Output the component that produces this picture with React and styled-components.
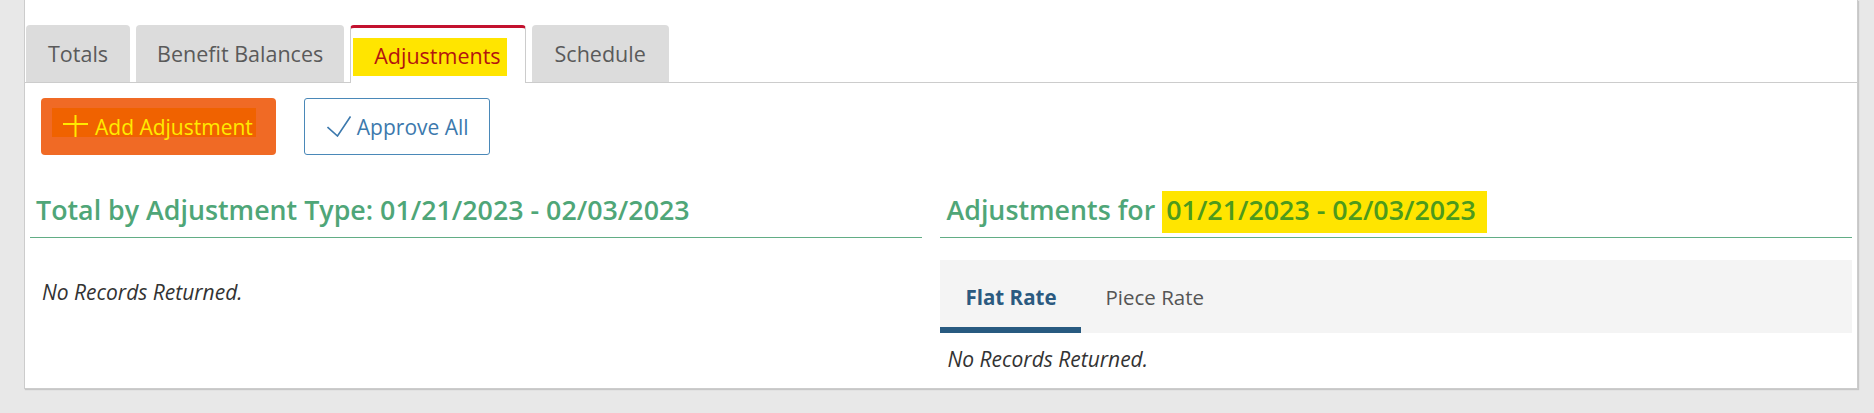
import React from "react";
import styled, { createGlobalStyle } from "styled-components";

const Global = createGlobalStyle`
  html, body { margin: 0; padding: 0; background: #e8e8e8; }
  body { font-family: "Open Sans", "Noto Sans", sans-serif; }
  * { box-sizing: border-box; }
`;

const Page = styled.div`
  width: 1874px;
  height: 413px;
  padding: 0 16px 0 24px;
  background: #e8e8e8;
`;

const Card = styled.div`
  height: 389px;
  background: #fff;
  border: 1px solid #cccccc;
  border-top: none;
  box-shadow: 1px 1px 1px rgba(0, 0, 0, 0.14);
  padding-top: 25px;
`;

const TabList = styled.div`
  display: flex;
  align-items: flex-end;
  gap: 6px;
  height: 58px;
  padding-left: 1px;
  border-bottom: 1px solid #cccccc;
`;

const Tab = styled.div`
  display: flex;
  align-items: center;
  height: ${(p) => (p.$active ? "58px" : "57px")};
  margin-bottom: ${(p) => (p.$active ? "-1px" : "0")};
  padding: ${(p) => (p.$active ? "0 18px 0 2px" : `0 ${p.$pad || 23}px`)};
  background: ${(p) => (p.$active ? "#ffffff" : "#dcdcdc")};
  border: ${(p) => (p.$active ? "1px solid #cccccc" : "none")};
  border-top: ${(p) => (p.$active ? "3px solid #c3122f" : "none")};
  border-bottom: none;
  border-radius: 4px 4px 0 0;
  font-size: 21.5px;
  color: #5a5a5a;
  white-space: nowrap;
`;

const TabMarker = styled.span`
  display: block;
  margin-top: 3px;
  padding: 3px 6px 6px 21px;
  background: #ffe500;
  color: #b3140f;
`;

const Toolbar = styled.div`
  display: flex;
  gap: 28px;
  padding: 15px 16px 0;
`;

const AddButton = styled.button`
  display: inline-flex;
  align-items: center;
  height: 57px;
  padding: 0 20px 0 11px;
  border: none;
  border-radius: 4px;
  background: #f06a25;
  font-family: inherit;
  font-size: 21px;
  color: #ffffff;
`;

const ButtonMarker = styled.span`
  display: inline-flex;
  align-items: flex-end;
  gap: 7px;
  height: 29px;
  margin-bottom: 8px;
  padding: 0 3px 0 11px;
  background: #f06200;
  color: #ffea00;
  line-height: 20px;
`;

const ApproveButton = styled.button`
  display: inline-flex;
  align-items: center;
  gap: 6px;
  height: 57px;
  padding: 0 20px 0 22px;
  border: 1px solid #4a88b8;
  border-radius: 3px;
  background: #ffffff;
  font-family: inherit;
  font-size: 21px;
  color: #3c79ad;
`;

const Columns = styled.div`
  display: grid;
  grid-template-columns: 892fr 911fr;
  column-gap: 18px;
  margin-top: 37px;
  padding: 0 5px;
`;

const Column = styled.section`
  min-width: 0;
`;

const Heading = styled.h2`
  margin: 0;
  padding: 0 6px 10px;
  border-bottom: 1px solid #62ad85;
  font-size: 26.8px;
  font-weight: 600;
  line-height: 35px;
  color: #4fa678;
  white-space: nowrap;
`;

const DateMarker = styled.span`
  padding: 0 11px 5px 4px;
  background: #ffe500;
  color: #4d9a1c;
`;

const Empty = styled.p`
  margin: ${(p) => p.$top}px 0 0;
  padding-left: ${(p) => p.$indent}px;
  font-size: 21px;
  font-style: italic;
  color: #333333;
`;

const SubTabBar = styled.div`
  display: flex;
  height: 73px;
  margin-top: 22px;
  background: #f4f4f4;
`;

const SubTab = styled.div`
  display: flex;
  align-items: center;
  padding: 0 24px 0 25px;
  font-size: 20.5px;
  font-weight: ${(p) => (p.$active ? 700 : 400)};
  color: ${(p) => (p.$active ? "#2b5a80" : "#555555")};
  box-shadow: ${(p) => (p.$active ? "inset 0 -6px 0 #285a80" : "none")};
`;

const PlusIcon = () => (
  <svg width="25" height="22" viewBox="0 0 25 22" fill="none" stroke="currentColor" strokeWidth="2">
    <path d="M12.5 0V22M0 9H25" />
  </svg>
);

const CheckIcon = () => (
  <svg width="24" height="21" viewBox="0 0 24 21" fill="none" stroke="currentColor" strokeWidth="1.6" strokeLinejoin="miter">
    <path d="M0.5 11L10.5 20L23.5 0.5" />
  </svg>
);

export default function App() {
  return (
    <>
      <Global />
      <Page>
        <Card>
          <TabList>
            <Tab $pad={22}>Totals</Tab>
            <Tab $pad={21}>Benefit Balances</Tab>
            <Tab $active>
              <TabMarker>Adjustments</TabMarker>
            </Tab>
            <Tab>Schedule</Tab>
          </TabList>
          <Toolbar>
            <AddButton type="button">
              <ButtonMarker>
                <PlusIcon />
                Add Adjustment
              </ButtonMarker>
            </AddButton>
            <ApproveButton type="button">
              <CheckIcon />
              Approve All
            </ApproveButton>
          </Toolbar>
          <Columns>
            <Column>
              <Heading>Total by Adjustment Type: 01/21/2023 - 02/03/2023</Heading>
              <Empty $top={40} $indent={12}>No Records Returned.</Empty>
            </Column>
            <Column>
              <Heading>
                Adjustments for <DateMarker>01/21/2023 - 02/03/2023</DateMarker>
              </Heading>
              <SubTabBar>
                <SubTab $active>Flat Rate</SubTab>
                <SubTab>Piece Rate</SubTab>
              </SubTabBar>
              <Empty $top={12} $indent={7}>No Records Returned.</Empty>
            </Column>
          </Columns>
        </Card>
      </Page>
    </>
  );
}
